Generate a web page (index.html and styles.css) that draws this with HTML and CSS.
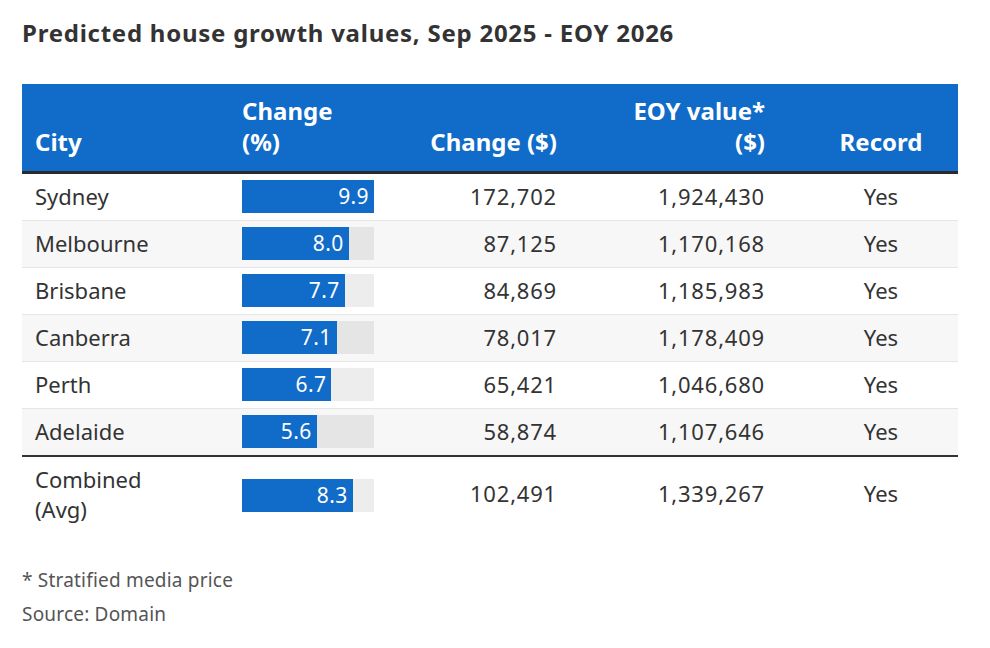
FILE: index.html
```html
<!DOCTYPE html>
<html lang="en">
<head>
<meta charset="utf-8">
<title>Predicted house growth values</title>
<link rel="stylesheet" href="styles.css">
</head>
<body>
<div class="chart">
  <h1 class="title">Predicted house growth values, Sep 2025 - EOY 2026</h1>
  <table class="data">
    <colgroup>
      <col class="c-city"><col class="c-pct"><col class="c-chg"><col class="c-eoy"><col class="c-rec">
    </colgroup>
    <thead>
      <tr>
        <th class="left">City</th>
        <th class="left">Change<br>(%)</th>
        <th class="right">Change ($)</th>
        <th class="right">EOY value*<br>($)</th>
        <th class="center rec">Record</th>
      </tr>
    </thead>
    <tbody>
      <tr>
        <td class="left txt">Sydney</td>
        <td class="barcell"><div class="track"><div class="bar" style="width:100%">9.9</div></div></td>
        <td class="num txt">172,702</td>
        <td class="num txt">1,924,430</td>
        <td class="center rec txt">Yes</td>
      </tr>
      <tr>
        <td class="left txt">Melbourne</td>
        <td class="barcell"><div class="track"><div class="bar" style="width:80.8%">8.0</div></div></td>
        <td class="num txt">87,125</td>
        <td class="num txt">1,170,168</td>
        <td class="center rec txt">Yes</td>
      </tr>
      <tr>
        <td class="left txt">Brisbane</td>
        <td class="barcell"><div class="track"><div class="bar" style="width:77.8%">7.7</div></div></td>
        <td class="num txt">84,869</td>
        <td class="num txt">1,185,983</td>
        <td class="center rec txt">Yes</td>
      </tr>
      <tr>
        <td class="left txt">Canberra</td>
        <td class="barcell"><div class="track"><div class="bar" style="width:71.7%">7.1</div></div></td>
        <td class="num txt">78,017</td>
        <td class="num txt">1,178,409</td>
        <td class="center rec txt">Yes</td>
      </tr>
      <tr>
        <td class="left txt">Perth</td>
        <td class="barcell"><div class="track"><div class="bar" style="width:67.7%">6.7</div></div></td>
        <td class="num txt">65,421</td>
        <td class="num txt">1,046,680</td>
        <td class="center rec txt">Yes</td>
      </tr>
      <tr class="last">
        <td class="left txt">Adelaide</td>
        <td class="barcell"><div class="track"><div class="bar" style="width:56.6%">5.6</div></div></td>
        <td class="num txt">58,874</td>
        <td class="num txt">1,107,646</td>
        <td class="center rec txt">Yes</td>
      </tr>
    </tbody>
    <tfoot>
      <tr>
        <td class="left city2">Combined<br>(Avg)</td>
        <td class="barcell"><div class="track"><div class="bar" style="width:83.8%">8.3</div></div></td>
        <td class="num txt">102,491</td>
        <td class="num txt">1,339,267</td>
        <td class="center rec txt">Yes</td>
      </tr>
    </tfoot>
  </table>
  <div class="notes">
    <p class="note">* Stratified media price</p>
    <p class="note">Source: Domain</p>
  </div>
</div>
</body>
</html>
```
FILE: styles.css
```css
* { box-sizing: border-box; }
html, body { margin: 0; padding: 0; background: #fff; }
body {
  font-family: "Noto Sans", "Open Sans", sans-serif;
  color: #333;
}
.chart { padding: 15px 32px 0 22px; width: 990px; }
.title {
  margin: 0;
  font-size: 24px;
  font-weight: 700;
  line-height: 36px;
  letter-spacing: 0.75px;
  color: #333;
}
.data {
  margin-top: 33px;
  width: 936px;
  border-collapse: collapse;
  table-layout: fixed;
}
.c-city { width: 207px; }
.c-pct { width: 171px; }
.c-chg { width: 170px; }
.c-eoy { width: 208px; }
.c-rec { width: 180px; }

thead th {
  background: #116bc8;
  color: #fff;
  font-size: 24px;
  font-weight: 700;
  line-height: 31px;
  padding: 11px 13px 14px;
  vertical-align: bottom;
  border-bottom: 3px solid #2b2b2b;
}
.left { text-align: left; }
.right { text-align: right; }
.center { text-align: center; }

tbody td, tfoot td {
  font-size: 22px;
  line-height: 30px;
  padding: 6px 13px 7px;
  height: 47px;
  vertical-align: middle;
  border-bottom: 1px solid #e6e6e6;
}
tbody td.txt { padding-bottom: 9px; }
tbody tr:nth-child(even) td { background: #f7f7f7; }
tbody tr.last td { border-bottom: 2px solid #333; }

tfoot td { border-bottom: none; padding-top: 8px; padding-bottom: 12px; }
tfoot td.city2 { padding-top: 7px; padding-bottom: 13px; }
tfoot td.txt { padding-top: 8px; padding-bottom: 16px; }

th.rec, td.rec, tfoot td.rec { padding-left: 39px; }
.num { text-align: right; letter-spacing: 0.8px; }

.track {
  width: 132px;
  height: 33px;
  background: rgba(0, 0, 0, 0.07);
}
.bar {
  height: 33px;
  background: #116bc8;
  color: #fff;
  font-size: 21px;
  line-height: 33px;
  text-align: right;
  padding-right: 5px;
  letter-spacing: 0.4px;
}

.notes { margin-top: 26px; }
.note {
  margin: 0;
  font-size: 19px;
  line-height: 34px;
  letter-spacing: 0.2px;
  color: #555;
}
```
